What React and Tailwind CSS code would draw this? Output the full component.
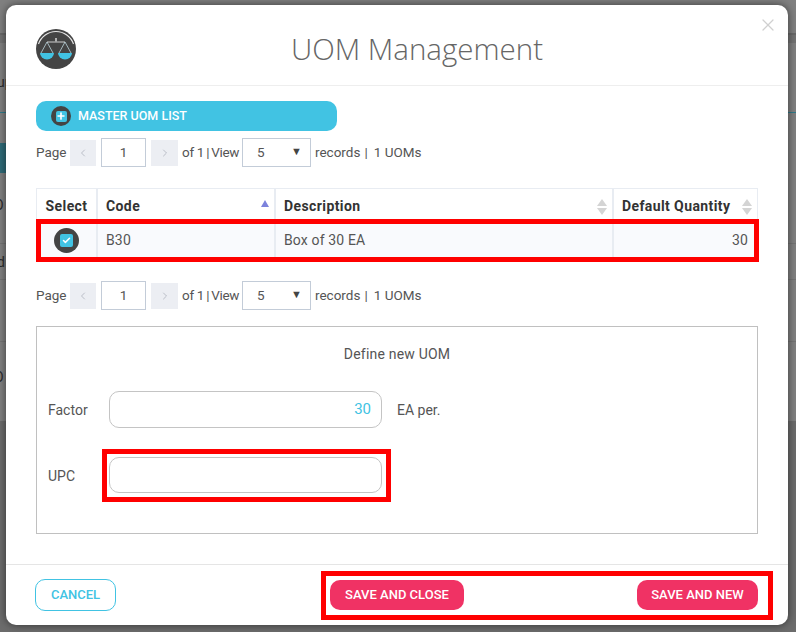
import { Plus, Check, X, ChevronLeft, ChevronRight } from 'lucide-react';

const font = { fontFamily: 'Roboto, "Liberation Sans", sans-serif' };

const ScaleLogo = () => (
  <svg width="40" height="40" viewBox="0 0 40 40">
    <circle cx="20" cy="20" r="20" fill="#444444" />
    <path d="M2.5 15 A18.5 18.5 0 0 1 37.5 15" fill="none" stroke="#e5e5e5" strokeWidth="1.2" />
    <rect x="19.2" y="9" width="1.6" height="3.5" fill="#cccccc" />
    <rect x="11" y="12.5" width="18" height="1" fill="#cccccc" />
    <path d="M11 13 L5 24 M11 13 L17 24 M29 13 L23 24 M29 13 L35 24" stroke="#cfe9f2" strokeWidth="0.7" fill="none" />
    <path d="M4 24 H18 A7 6.5 0 0 1 4 24 Z" fill="#41c3e3" />
    <path d="M22 24 H36 A7 6.5 0 0 1 22 24 Z" fill="#41c3e3" />
  </svg>
);

const Pager = () => (
  <div className="flex items-start h-[30px] text-[13.5px] text-[#555555]">
    <span className="w-[34px] mt-[4px]">Page</span>
    <span className="flex items-center justify-center w-[26px] h-[26px] mt-[2px] bg-[#eceef3] text-[#a9aeb8]">
      <ChevronLeft size={12} strokeWidth={1.5} />
    </span>
    <span className="flex items-center justify-center w-[45px] h-[29px] ml-[5px] border border-[#c3ccd8]">1</span>
    <span className="flex items-center justify-center w-[27px] h-[26px] mt-[2px] ml-[5px] bg-[#eceef3] text-[#a9aeb8]">
      <ChevronRight size={12} strokeWidth={1.5} />
    </span>
    <span className="flex w-[60px] mt-[4px] ml-[4px] whitespace-nowrap tracking-[-0.3px]">
      of 1<span className="mx-[2px]">|</span>View
    </span>
    <span className="flex items-center justify-between w-[69px] h-[29px] border border-[#c3ccd8] pl-[14px] pr-[8px]">
      5<span className="text-[11px] text-[#444444]">▼</span>
    </span>
    <span className="flex mt-[4px] ml-[4px] whitespace-nowrap">
      records<span className="ml-[4px]">|</span><span className="ml-[6px]">1 UOMs</span>
    </span>
  </div>
);

const SortArrows = () => (
  <span className="flex flex-col gap-[2px]">
    <span className="w-0 h-0 border-x-[5px] border-x-transparent border-b-[7px] border-b-[#d4d4d4]" />
    <span className="w-0 h-0 border-x-[5px] border-x-transparent border-t-[7px] border-t-[#d4d4d4]" />
  </span>
);

// what is left visible of the dimmed page behind the modal
const Backdrop = () => (
  <div className="flex flex-col h-full text-[14px] leading-none text-[#2b2b2b]">
    <div className="h-[33px] shrink-0" />
    <div className="h-[10px] shrink-0 bg-[#737373] border-t-2 border-[#696969]" />
    <div className="h-[69px] shrink-0 flex items-center justify-start pl-0 pt-[8px]">
      <span className="-ml-[3px]">up</span>
    </div>
    <div className="h-px shrink-0 bg-[#2f7a8a]" />
    <div className="h-[30px] shrink-0" />
    <div className="h-[30px] shrink-0 w-[8px] bg-[#2f6b78]" />
    <div className="h-[70px] shrink-0 flex items-center">
      <span className="-ml-[6px] -mt-[6px]">O</span>
    </div>
    <div className="h-[36px] shrink-0 flex items-center border-t border-[#747474]">
      <span className="-ml-[3px]">d</span>
    </div>
    <div className="h-[62px] shrink-0 border-t border-[#747474]" />
    <div className="h-[80px] shrink-0 flex items-center border-t border-[#747474]">
      <span className="-ml-[6px] -mt-[10px]">O</span>
    </div>
    <div className="flex-1 bg-[#6c6c6c]" />
  </div>
);

export default function App() {
  return (
    <div className="relative w-[796px] h-[632px] overflow-hidden bg-[#808080]" style={font}>
      <Backdrop />

      <div className="absolute left-[6px] top-[5px] w-[782px] h-[620px] flex flex-col bg-white rounded-[10px] shadow-[0_0_8px_rgba(0,0,0,0.55)]">
        <div className="relative h-[81px] shrink-0 border-b border-[#eeeeee] flex items-center justify-center pl-[40px]">
          <div className="absolute left-[30px] top-[24px]"><ScaleLogo /></div>
          <h1 className="text-[29.5px] font-light text-[#666666] mt-[8px]" style={{ fontFamily: '"Open Sans", sans-serif' }}>UOM Management</h1>
          <X size={20} strokeWidth={1.5} className="absolute right-[10px] top-[10px] text-[#d0d0d0]" />
        </div>

        <div className="flex-1 flex flex-col pl-[30px]">
          <div className="mt-[15px] w-[301px] h-[30px] rounded-[10px] bg-[#41c3e3] flex items-center pl-[15px]">
            <span className="flex items-center justify-center w-5 h-5 rounded-full bg-[#444444]">
              <span className="flex items-center justify-center w-[11px] h-[11px] rounded-[2px] bg-[#41c3e3]">
                <Plus size={10} strokeWidth={4} className="text-white" />
              </span>
            </span>
            <span className="ml-[7px] text-[12.5px] font-medium text-white">MASTER UOM LIST</span>
          </div>

          <div className="mt-[7px]"><Pager /></div>

          <div className="relative mt-[20px] w-[722px] text-[14px] tracking-[0.15px] text-[#555555]">
            <div className="flex h-[36px] border border-[#e8ecf2] border-b-0 font-bold tracking-[0.4px] text-[#333333]">
              <div className="w-[61px] flex items-center justify-center border-r-2 border-[#e8ecf2]">Select</div>
              <div className="w-[178px] flex items-center justify-between pl-[8px] pr-[5px] border-r-2 border-[#e8ecf2]">
                Code
                <span className="w-0 h-0 -mt-[6px] border-x-[4px] border-x-transparent border-b-[7px] border-b-[#7c82dc]" />
              </div>
              <div className="w-[338px] flex items-center justify-between pl-[8px] pr-[5px] border-r-2 border-[#e8ecf2]">
                Description<SortArrows />
              </div>
              <div className="flex-1 flex items-center justify-between pl-[8px] pr-[5px]">
                Default Quantity<SortArrows />
              </div>
            </div>
            <div className="flex h-[33px] bg-[#f9fafd] border-x border-[#e8ecf2]">
              <div className="w-[61px] flex items-center justify-center border-r-2 border-[#e8ecf2]">
                <span className="flex items-center justify-center w-[25px] h-[25px] rounded-full bg-[#444444]">
                  <span className="flex items-center justify-center w-[13px] h-[13px] rounded-[2px] bg-[#41c3e3]">
                    <Check size={9} strokeWidth={4} className="text-white" />
                  </span>
                </span>
              </div>
              <div className="w-[178px] flex items-center pl-[8px] border-r-2 border-[#e8ecf2]">B30</div>
              <div className="w-[338px] flex items-center pl-[8px] border-r-2 border-[#e8ecf2]">Box of 30 EA</div>
              <div className="flex-1 flex items-center justify-end pr-[9px]">30</div>
            </div>
            {/* review highlight over the row */}
            <div className="absolute left-0 top-[31px] w-[723px] h-[43px] border-[5px] border-[#ff0000] pointer-events-none" />
          </div>

          <div className="mt-[24px]"><Pager /></div>

          <div className="mt-[15px] w-[722px] h-[208px] border border-[#c0c0c0] flex flex-col text-[14px] text-[#555555]">
            <div className="text-center tracking-[0.2px] mt-[17px] h-[21px]">Define new UOM</div>
            <div className="flex items-center mt-[26px] h-[37px]">
              <span className="w-[72px] pl-[11px] pt-[2px]">Factor</span>
              <div className="w-[273px] h-[37px] rounded-[10px] border border-[#c4c4c4] flex items-center justify-end pr-[10px] text-[15px] text-[#41c3e3]">30</div>
              <span className="ml-[15px] pt-[2px]">EA per.</span>
            </div>
            <div className="relative flex items-center mt-[29px] h-[36px]">
              <span className="w-[72px] pl-[11px] pt-[3px]">UPC</span>
              <div className="w-[273px] h-[36px] rounded-[10px] border border-[#c4c4c4]" />
              <div className="absolute left-[65px] -top-[8px] w-[289px] h-[53px] border-[5px] border-[#ff0000] pointer-events-none" />
            </div>
          </div>
        </div>

        <div className="relative h-[61px] shrink-0 border-t border-[#e5e5e5] flex items-center justify-between pl-[29px] pr-[30px]">
          <span className="flex items-center justify-center w-[81px] h-[32px] rounded-[10px] border border-[#41c3e3] text-[13px] font-medium text-[#41c3e3]">CANCEL</span>
          <span className="flex items-center justify-center w-[134px] h-[30px] ml-[214px] rounded-[10px] bg-[#f03264] text-[13px] font-medium text-white">SAVE AND CLOSE</span>
          <span className="flex items-center justify-center w-[121px] h-[30px] ml-auto rounded-[10px] bg-[#f03264] text-[13px] font-medium text-white">SAVE AND NEW</span>
          <div className="absolute left-[315px] top-[6px] w-[452px] h-[49px] border-[5px] border-[#ff0000] pointer-events-none" />
        </div>
      </div>
    </div>
  );
}
